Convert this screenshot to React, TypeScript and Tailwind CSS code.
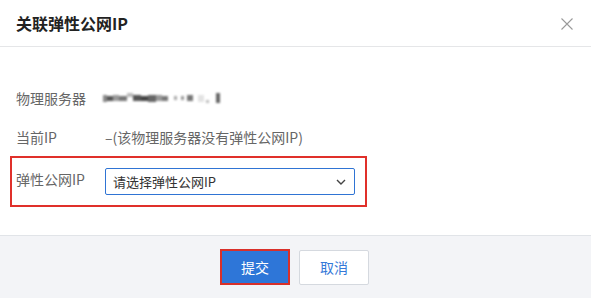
import React from "react";

const font = { fontFamily: '"Noto Sans CJK SC", "Noto Sans", sans-serif' };

export default function App() {
  return (
    <div
      className="w-[591px] h-[298px] bg-white flex flex-col overflow-hidden"
      style={font}
    >
      {/* header */}
      <div className="h-[47px] shrink-0 border-b border-[#e5e6e8] flex items-center justify-between pl-4 pr-[18px]">
        <div className="text-[16px] font-bold text-[#222] leading-none">关联弹性公网IP</div>
        <svg width="12" height="12" viewBox="0 0 12 12" className="mt-[1px]">
          <path d="M0.5 0.5 L11.5 11.5 M11.5 0.5 L0.5 11.5" stroke="#9a9a9a" strokeWidth="1.1" />
        </svg>
      </div>

      {/* body */}
      <div className="flex-1 flex flex-col pt-[41px]">
        <div className="h-[20px] flex items-center pl-4">
          <div className="w-[87px] text-[14px] text-[#666]">物理服务器</div>
          <div className="flex items-center blur-[1px]">
            <span className="w-[4px] h-[7px] bg-[#888]" />
            <span className="w-[6px] h-[5px] bg-[#555]" />
            <span className="w-[6px] h-[6px] bg-[#999]" />
            <span className="w-[8px] h-[5px] bg-[#777]" />
            <span className="w-[6px] h-[4px] bg-[#bbb] self-end mb-[6px]" />
            <span className="w-[8px] h-[6px] bg-[#555]" />
            <span className="w-[7px] h-[5px] bg-[#444]" />
            <span className="w-[8px] h-[7px] bg-[#666]" />
            <span className="w-[6px] h-[6px] bg-[#999]" />
            <span className="w-[6px] h-[5px] bg-[#777]" />
            <span className="w-[3px] h-[4px] bg-[#aaa] ml-[6px]" />
            <span className="w-[3px] h-[4px] bg-[#999] ml-[4px]" />
            <span className="w-[6px] h-[6px] bg-[#777] ml-[3px]" />
            <span className="w-[6px] h-[7px] bg-[#e3e3e3] ml-[5px]" />
            <span className="w-[3px] h-[3px] bg-[#bbb] ml-[2px] mt-[6px]" />
            <span className="w-[4px] h-[10px] bg-[#666] ml-[7px]" />
          </div>
        </div>
        <div className="h-[20px] flex items-center pl-4 mt-[19px]">
          <div className="w-[89px] text-[14px] text-[#666]">当前IP</div>
          <div className="text-[14px] text-[#666]">–(该物理服务器没有弹性公网IP)</div>
        </div>
        <div className="mt-[9px] ml-[10px] w-[357px] h-[51px] border-2 border-[#e0302a] flex pl-[4px] pt-[10px]">
          <div className="w-[89px] text-[14px] text-[#666] leading-[20px] pt-[1px]">弹性公网IP</div>
          <div className="w-[250px] h-[27px] border border-[#2f74d4] rounded-[2px] flex items-center justify-between pl-[7px] pr-[8px]">
            <span className="text-[13px] text-[#333]">请选择弹性公网IP</span>
            <svg width="10" height="6" viewBox="0 0 10 6">
              <path d="M1 1 L5 5 L9 1" fill="none" stroke="#444" strokeWidth="1.4" />
            </svg>
          </div>
        </div>
      </div>

      {/* footer */}
      <div className="h-[63px] shrink-0 border-t border-[#e1e4e8] bg-[#f3f4f7] flex items-center justify-center gap-[9px] pr-[2px]">
        <button className="w-[70px] h-[36px] border-2 border-[#d9302a] bg-[#2e76d8] text-white text-[14px] flex items-center justify-center">
          提交
        </button>
        <button className="w-[70px] h-[35px] border border-[#d5d9df] rounded-[2px] bg-white text-[#3479d8] text-[14px] flex items-center justify-center">
          取消
        </button>
      </div>
    </div>
  );
}
